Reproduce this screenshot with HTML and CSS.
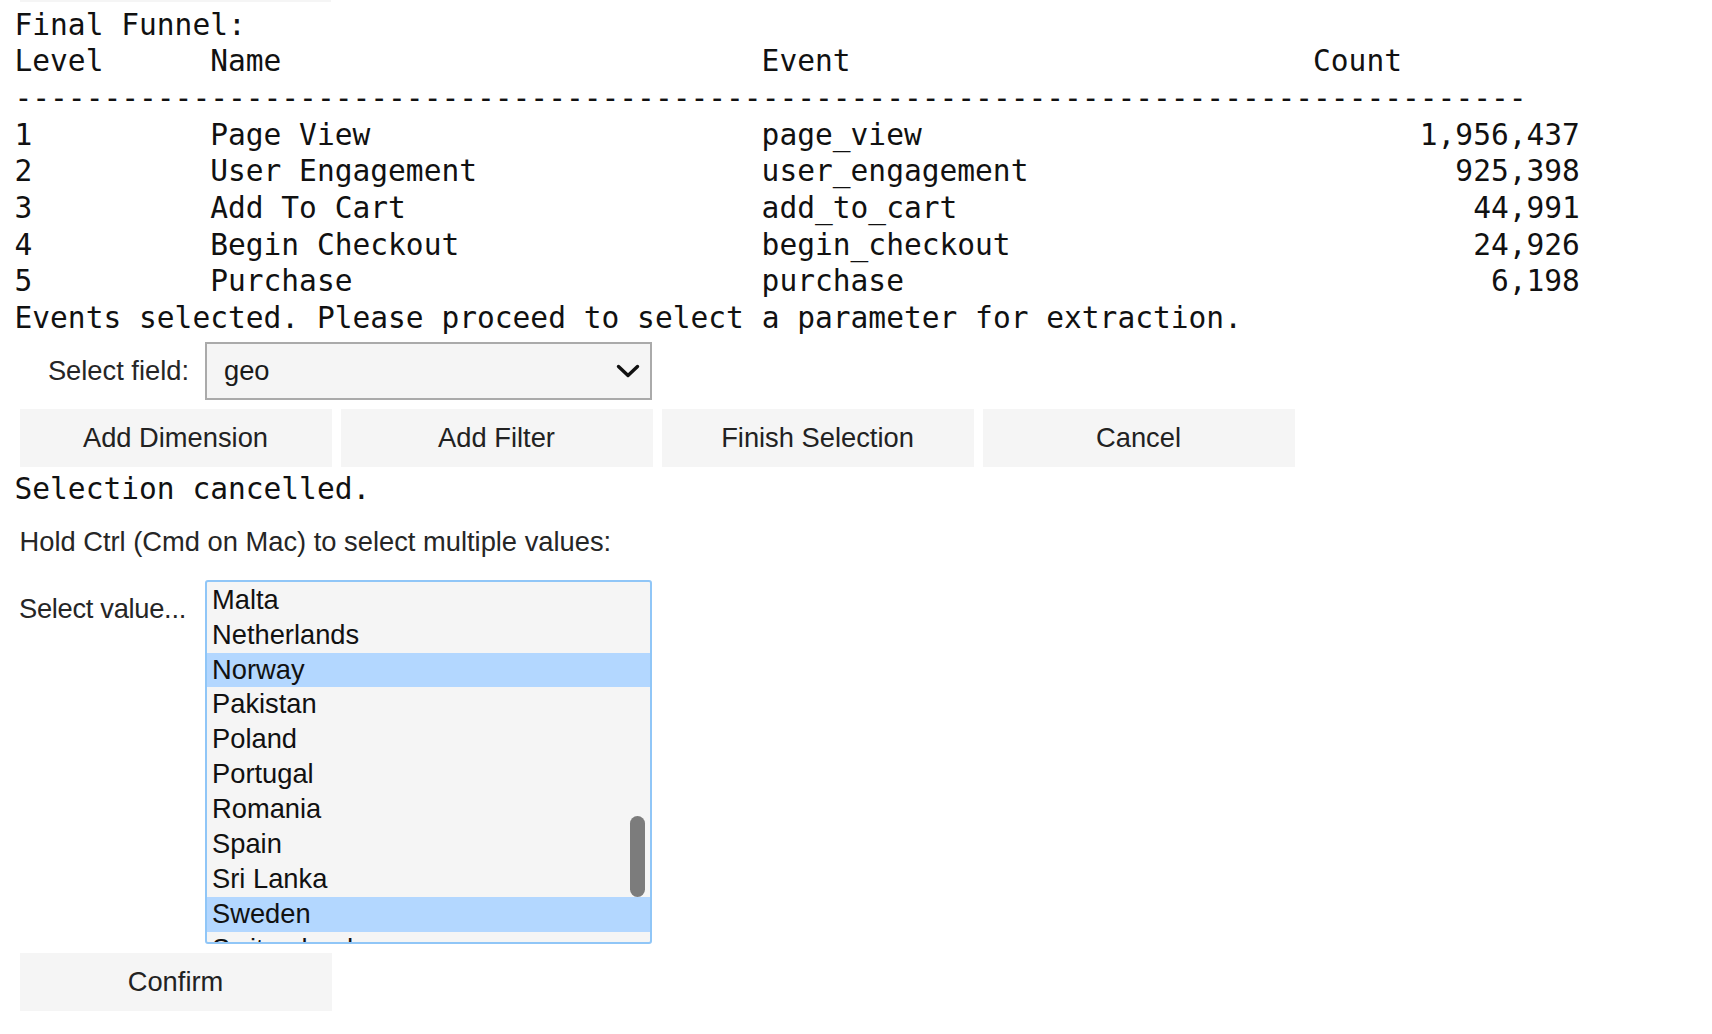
FILE: index.html
```html
<!DOCTYPE html>
<html lang="en">
<head>
<meta charset="utf-8">
<title>Funnel</title>
<link rel="stylesheet" href="styles.css">
</head>
<body>
<div class="page">
  <div class="prev-button-edge"></div>
  <div class="stdout first">
    <div class="line">Final Funnel:</div>
    <div class="funnel-row"><span>Level</span><span>Name</span><span>Event</span><span>Count</span></div>
    <div class="line">-------------------------------------------------------------------------------------</div>
    <div class="funnel-row"><span>1</span><span>Page View</span><span>page_view</span><span class="num">1,956,437</span></div>
    <div class="funnel-row"><span>2</span><span>User Engagement</span><span>user_engagement</span><span class="num">925,398</span></div>
    <div class="funnel-row"><span>3</span><span>Add To Cart</span><span>add_to_cart</span><span class="num">44,991</span></div>
    <div class="funnel-row"><span>4</span><span>Begin Checkout</span><span>begin_checkout</span><span class="num">24,926</span></div>
    <div class="funnel-row"><span>5</span><span>Purchase</span><span>purchase</span><span class="num">6,198</span></div>
    <div class="line">Events selected. Please proceed to select a parameter for extraction.</div>
  </div>

  <div class="widget-row field-row">
    <label class="widget-label">Select field:</label>
    <div class="dropdown">
      <span class="dropdown-value">geo</span>
      <svg class="chevron" width="24" height="14" viewBox="0 0 24 14"><path d="M2.5 2.5 L12 11.5 L21.5 2.5" fill="none" stroke="#111" stroke-width="3.4" stroke-linecap="round" stroke-linejoin="round"/></svg>
    </div>
  </div>

  <div class="button-row">
    <button class="widget-button">Add Dimension</button>
    <button class="widget-button">Add Filter</button>
    <button class="widget-button">Finish Selection</button>
    <button class="widget-button">Cancel</button>
  </div>

  <div class="stdout cancelled">
    <div class="line">Selection cancelled.</div>
  </div>

  <div class="hint">Hold Ctrl (Cmd on Mac) to select multiple values:</div>

  <div class="widget-row multi-row">
    <label class="widget-label label-left">Select value...</label>
    <div class="listbox">
      <div class="options">
        <div class="option">Malta</div>
        <div class="option">Netherlands</div>
        <div class="option selected">Norway</div>
        <div class="option">Pakistan</div>
        <div class="option">Poland</div>
        <div class="option">Portugal</div>
        <div class="option">Romania</div>
        <div class="option">Spain</div>
        <div class="option">Sri Lanka</div>
        <div class="option selected">Sweden</div>
        <div class="option">Switzerland</div>
      </div>
      <div class="scroll-thumb"></div>
    </div>
  </div>

  <div class="button-row confirm-row">
    <button class="widget-button">Confirm</button>
  </div>
</div>
</body>
</html>
```

FILE: styles.css
```css
html, body {
  margin: 0;
  padding: 0;
  background: #ffffff;
}

.page {
  width: 1712px;
}

.prev-button-edge {
  margin-left: 20px;
  width: 311px;
  height: 2px;
  background: #f5f5f5;
}

.stdout {
  font-family: "DejaVu Sans Mono", "Liberation Mono", monospace;
  font-size: 29.55px;
  line-height: 36.7px;
  color: #111111;
  padding-left: 14.5px;
}

.stdout .line,
.stdout .funnel-row span {
  white-space: pre;
}

.stdout.first {
  margin-top: 4.5px;
}

.funnel-row {
  display: grid;
  grid-template-columns: 11ch 31ch 31ch 15ch;
  height: 36.7px;
}

.funnel-row .num {
  text-align: right;
}

.widget-row {
  display: flex;
  padding-left: 19px;
  font-family: "Liberation Sans", Arial, sans-serif;
  font-size: 27.3px;
  color: #262626;
}

.field-row {
  margin-top: 5.5px;
  align-items: center;
}

.widget-label {
  width: 186px;
  flex: none;
  box-sizing: border-box;
  padding-right: 16px;
  text-align: right;
  white-space: nowrap;
  overflow: hidden;
  text-overflow: ellipsis;
}

.label-left {
  text-align: left;
  line-height: 58.8px;
  overflow: visible;
  text-overflow: clip;
  letter-spacing: -0.3px;
}

.dropdown {
  width: 447px;
  height: 58px;
  box-sizing: border-box;
  border: 2px solid #aaaaaa;
  background: #f5f5f5;
  display: flex;
  align-items: center;
  justify-content: space-between;
  padding: 0 10px 0 17px;
  color: #1a1a1a;
}

.chevron {
  display: block;
}

.button-row {
  display: flex;
  gap: 9px;
  padding-left: 19.5px;
  margin-top: 9px;
}

.widget-button {
  width: 312px;
  height: 58px;
  border: none;
  padding: 0;
  margin: 0;
  background: #f5f5f5;
  font-family: "Liberation Sans", Arial, sans-serif;
  font-size: 27.3px;
  color: #222222;
}

.stdout.cancelled {
  margin-top: 4px;
}

.hint {
  margin-top: 5.5px;
  height: 58.8px;
  line-height: 58.8px;
  padding-left: 19.5px;
  font-family: "Liberation Sans", Arial, sans-serif;
  font-size: 27.3px;
  color: #262626;
}

.multi-row {
  margin-top: 8px;
  align-items: flex-start;
}

.listbox {
  position: relative;
  width: 447px;
  height: 364px;
  box-sizing: border-box;
  border: 2px solid #90c6f7;
  border-radius: 3px;
  background: #f5f5f5;
  overflow: hidden;
}

.options {
  padding-top: 0.5px;
}

.option {
  height: 34.9px;
  line-height: 33.5px;
  padding-left: 5px;
  color: #111111;
  white-space: nowrap;
}

.option.selected {
  background: #b3d7ff;
}

.scroll-thumb {
  position: absolute;
  right: 5px;
  top: 234px;
  width: 15px;
  height: 81px;
  border-radius: 8px;
  background: #7c7c7c;
}
```
